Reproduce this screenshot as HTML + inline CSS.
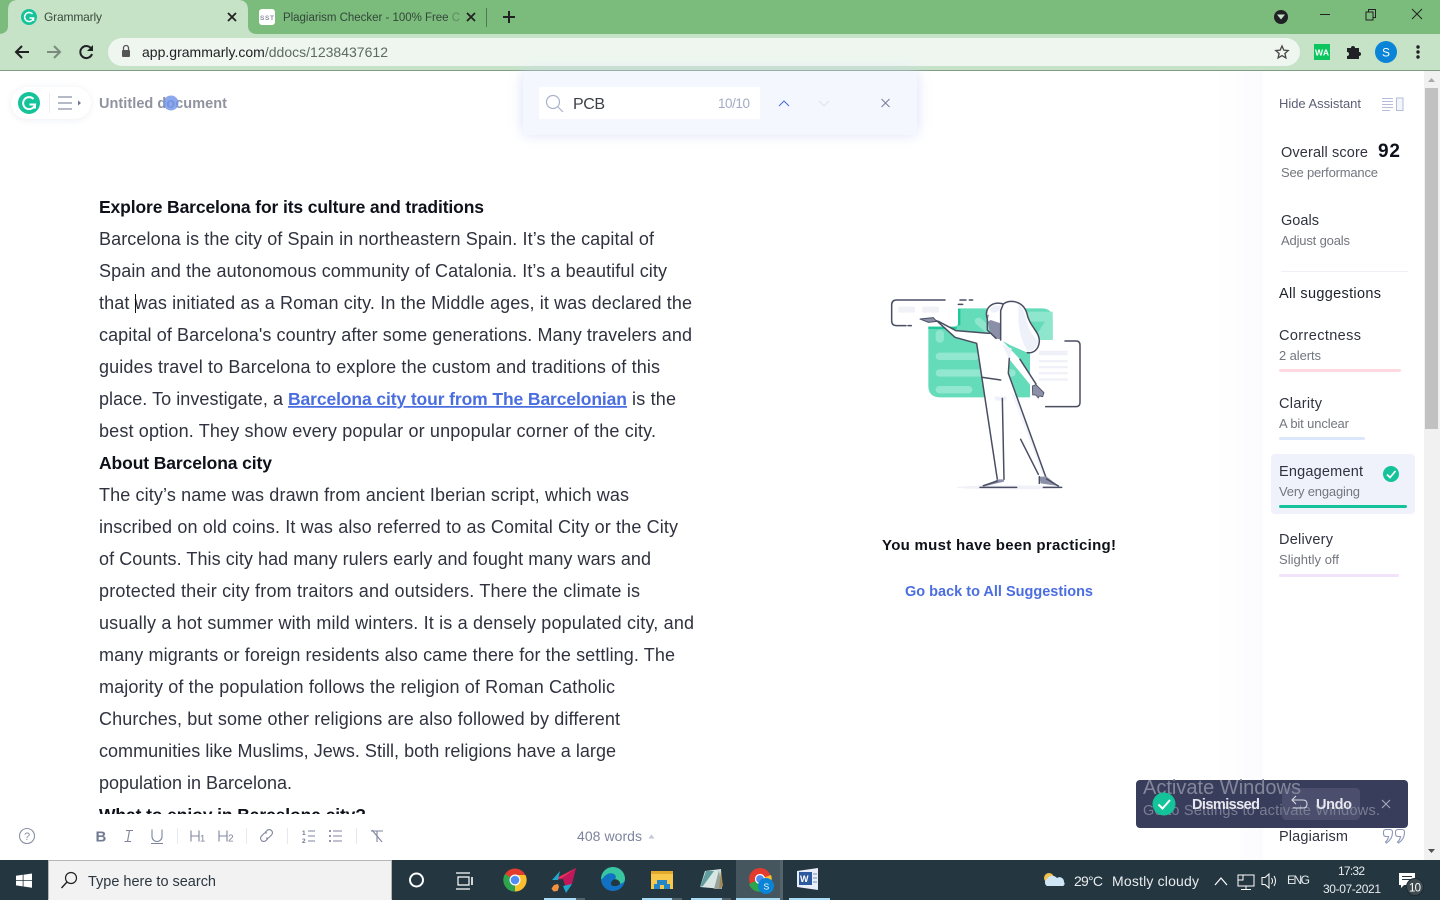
<!DOCTYPE html>
<html lang="en"><head><meta charset="utf-8"><title>Grammarly</title>
<style>
html,body{margin:0;padding:0;background:#fff;width:1440px;height:900px;overflow:hidden}
svg{display:block}
text{font-family:"Liberation Sans",sans-serif}
.b{font-size:18px;fill:#30323f}
.h{font-size:17.5px;font-weight:700;fill:#0e101a}
.s{font-size:14.5px;fill:#30323f}
.m{font-size:13px;fill:#73767f}
.tb{fill:none;stroke:#7d849c;stroke-width:1.1}
</style></head><body>
<svg width="1440" height="900" viewBox="0 0 1440 900" xmlns="http://www.w3.org/2000/svg">
<defs>
<linearGradient id="pg" x1="0" x2="1" y1="0" y2="0"><stop offset="0" stop-color="#fff"/><stop offset="1" stop-color="#fbfbfd"/></linearGradient>
<filter id="sh" x="-20%" y="-50%" width="140%" height="200%"><feGaussianBlur stdDeviation="7"/></filter>
<filter id="sh2" x="-20%" y="-50%" width="140%" height="200%"><feGaussianBlur stdDeviation="4"/></filter>
<clipPath id="doc"><rect x="0" y="130" width="720" height="684"/></clipPath>
</defs>
<rect width="1440" height="900" fill="#fff"/>

<!-- Chrome top -->
<rect width="1440" height="34" fill="#7bbb7c"/>
<rect y="34" width="1440" height="36" fill="#c6e2c7"/>
<rect y="70" width="1440" height="1" fill="#7f9d84"/>
<path d="M0 34 Q8 33 8 26 V10 Q8 0 18 0 H238 Q248 0 248 10 V26 Q248 33 256 34Z" fill="#c6e2c7"/>
<circle cx="29" cy="17" r="8" fill="#15c39a"/>
<path d="M32.500 14 A4.500 4.500 0 1 0 33.500 18 H29.500 M33.500 18 L33.500 21" fill="none" stroke="#fff" stroke-width="1.500"/>
<text x="44" y="21" font-size="12" fill="#3a4a3c" textLength="58">Grammarly</text>
<path d="M228 13 L236 21 M236 13 L228 21" stroke="#222" stroke-width="1.800"/>
<rect x="259" y="9" width="16" height="16" rx="3" fill="#fff"/>
<text x="260" y="20" font-size="6.500" font-weight="700" fill="#8a8fa0" textLength="14">SST</text>
<text x="283" y="21" font-size="11.500" fill="#33463a" textLength="177">Plagiarism Checker - 100% Free C</text>
<rect x="449" y="8" width="12" height="18" fill="#7bbb7c" opacity=".6"/>
<path d="M467 13 L475 21 M475 13 L467 21" stroke="#222" stroke-width="1.800"/>
<rect x="486" y="8" width="1" height="19" fill="#4f7a50"/>
<path d="M509 11 V23 M503 17 H515" stroke="#222" stroke-width="2"/>
<circle cx="1281" cy="17" r="7" fill="#202124"/><path d="M1277 14.500 H1285 L1281 19.500Z" fill="#c6e2c7"/>
<rect x="1320" y="14" width="10" height="1" fill="#222"/>
<path d="M1366 12 h7 v8 h-7z M1368.500 12 v-2.500 h7 v8 h-2.500" fill="none" stroke="#222" stroke-width="1"/>
<path d="M1412 9 L1422 19 M1422 9 L1412 19" stroke="#222" stroke-width="1"/>

<!-- toolbar -->
<path d="M29 52 H16 M22 46 L16 52 L22 58" fill="none" stroke="#202124" stroke-width="2"/>
<path d="M47 52 H60 M54 46 L60 52 L54 58" fill="none" stroke="#7c8a7e" stroke-width="2"/>
<path d="M91.500 49 A6 6 0 1 0 92 54" fill="none" stroke="#202124" stroke-width="2"/><path d="M93 45 V51 H87Z" fill="#202124"/>
<rect x="108" y="38" width="1192" height="28" rx="14" fill="#eff6f0"/>
<rect x="122" y="50" width="8" height="7" rx="1" fill="#555"/><path d="M123.500 50 V48 a2.500 2.500 0 0 1 5 0 V50" fill="none" stroke="#555" stroke-width="1.300"/>
<text x="142" y="57" font-size="14" fill="#5c6a60" textLength="246"><tspan fill="#202124">app.grammarly.com</tspan>/ddocs/1238437612</text>
<path d="M1282 46 l1.800 4.100 4.400 .4 -3.300 3 1 4.400 -3.900 -2.300 -3.900 2.300 1 -4.400 -3.300 -3 4.400 -.4z" fill="none" stroke="#444" stroke-width="1.300"/>
<rect x="1314" y="44" width="16" height="16" fill="#0cc55f"/>
<text x="1315" y="55.500" font-size="8.500" font-weight="700" fill="#fff" textLength="14">WA</text>
<path d="M1347 49 h4 a2 2 0 0 1 4 0 h4 v4 a2 2 0 0 1 0 4 v3 h-12 v-3 a2 2 0 0 0 0 -4z" fill="#202124" transform="translate(0,-1)"/>
<circle cx="1386" cy="52" r="11" fill="#0a84d6"/>
<text x="1382" y="56.500" font-size="12" fill="#fff">S</text>
<circle cx="1418" cy="47" r="1.700" fill="#202124"/><circle cx="1418" cy="52" r="1.700" fill="#202124"/><circle cx="1418" cy="57" r="1.700" fill="#202124"/>

<!-- side shade -->
<rect x="1215" y="71" width="48" height="789" fill="url(#pg)"/>

<!-- grammarly pill -->
<rect x="12" y="89" width="78" height="30" rx="15" fill="#d8dbe6" filter="url(#sh2)" opacity=".6"/>
<rect x="11" y="87" width="80" height="32" rx="16" fill="#fff"/>
<circle cx="29" cy="103" r="11" fill="#15c39a"/>
<path d="M33.500 99 A6 6 0 1 0 35 104.500 H29.500 M35 104.500 V108.500" fill="none" stroke="#fff" stroke-width="2"/>
<rect x="49" y="93" width="1" height="20" fill="#eceef3"/>
<path d="M58 97 H72 M58 103 H72 M58 109 H72" stroke="#6d758d" stroke-width="1.100"/>
<path d="M78 100.500 L81 103 L78 105.500Z" fill="#6d758d"/>
<text x="99" y="108" font-size="14.500" font-weight="700" fill="#8f939f" textLength="128">Untitled document</text>
<circle cx="171" cy="103" r="7.500" fill="#6f93ec" opacity=".8"/>

<!-- Find bar -->
<rect x="523" y="72" width="394" height="62" rx="4" fill="#cfd8f5" filter="url(#sh)" opacity=".8"/>
<path d="M523 71 H917 V130 Q917 135 912 135 H528 Q523 135 523 130Z" fill="#f5f7fe"/>
<rect x="539" y="87" width="221" height="32" fill="#fff"/>
<circle cx="553" cy="102" r="6.500" fill="none" stroke="#a9b2cc" stroke-width="1.200"/><path d="M558 107 L563 112" stroke="#a9b2cc" stroke-width="1.200"/>
<text x="573" y="109" font-size="16" fill="#3e4048" textLength="32">PCB</text>
<text x="718" y="108" font-size="13.500" fill="#a3abc5" textLength="32">10/10</text>
<path d="M779 106 L784 101 L789 106" fill="none" stroke="#4a6ee0" stroke-width="1.100"/>
<path d="M819 101 L824 106 L829 101" fill="none" stroke="#dfe3f1" stroke-width="1.100"/>
<path d="M881.500 99 L889.500 107 M889.500 99 L881.500 107" stroke="#7b819b" stroke-width="1.100"/>

<!-- Document -->
<g clip-path="url(#doc)">
<text x="99" y="213" class="h" textLength="385">Explore Barcelona for its culture and traditions</text>
<text x="99" y="245" class="b" textLength="555">Barcelona is the city of Spain in northeastern Spain. It’s the capital of</text>
<text x="99" y="277" class="b" textLength="568">Spain and the autonomous community of Catalonia. It’s a beautiful city</text>
<text x="99" y="309" class="b" textLength="593">that was initiated as a Roman city. In the Middle ages, it was declared the</text>
<text x="99" y="341" class="b" textLength="593">capital of Barcelona's country after some generations. Many travelers and</text>
<text x="99" y="373" class="b" textLength="561">guides travel to Barcelona to explore the custom and traditions of this</text>
<text x="99" y="405" class="b" textLength="184">place. To investigate, a</text>
<text x="288" y="405" font-size="17.500" font-weight="700" fill="#4a6ee0" text-decoration="underline" textLength="339">Barcelona city tour from The Barcelonian</text>
<text x="632" y="405" class="b" textLength="44">is the</text>
<text x="99" y="437" class="b" textLength="557">best option. They show every popular or unpopular corner of the city.</text>
<text x="99" y="469" class="h" textLength="173">About Barcelona city</text>
<text x="99" y="501" class="b" textLength="530">The city’s name was drawn from ancient Iberian script, which was</text>
<text x="99" y="533" class="b" textLength="579">inscribed on old coins. It was also referred to as Comital City or the City</text>
<text x="99" y="565" class="b" textLength="552">of Counts. This city had many rulers early and fought many wars and</text>
<text x="99" y="597" class="b" textLength="541">protected their city from traitors and outsiders. There the climate is</text>
<text x="99" y="629" class="b" textLength="595">usually a hot summer with mild winters. It is a densely populated city, and</text>
<text x="99" y="661" class="b" textLength="576">many migrants or foreign residents also came there for the settling. The</text>
<text x="99" y="693" class="b" textLength="516">majority of the population follows the religion of Roman Catholic</text>
<text x="99" y="725" class="b" textLength="521">Churches, but some other religions are also followed by different</text>
<text x="99" y="757" class="b" textLength="517">communities like Muslims, Jews. Still, both religions have a large</text>
<text x="99" y="789" class="b" textLength="193">population in Barcelona.</text>
<text x="99" y="821" class="h" textLength="267">What to enjoy in Barcelona city?</text>
</g>
<rect x="135" y="294" width="1" height="19" fill="#111"/>

<!-- Illustration -->
<g transform="translate(870,280) scale(.33333)">
<path d="M265 85 H515 Q548 85 548 118 V180 H480 V352 H210 Q175 352 175 317 V140 H250 Q265 140 265 125Z" fill="#64dcb9"/>
<rect x="175" y="140" width="85" height="7" fill="#1fc79a"/><rect x="264" y="86" width="7" height="50" fill="#1fc79a"/>
<rect x="197" y="150" width="25" height="38" rx="12" fill="#8ee6cd"/>
<rect x="197" y="218" width="130" height="22" rx="11" fill="#91e7cf"/>
<rect x="197" y="268" width="240" height="22" rx="11" fill="#91e7cf"/>
<rect x="197" y="318" width="110" height="22" rx="11" fill="#91e7cf"/>
<path d="M470 95 H548 V180 H490 L525 125 H480Z" fill="#8ee6cd"/>
<rect x="310" y="125" width="60" height="22" rx="11" transform="rotate(40 340 136)" fill="#8ee6cd"/>
<path d="M480 182 H620 Q630 182 630 195 V368 Q630 380 618 380 H480Z" fill="#fff"/>
<path d="M585 183 H618 Q630 183 630 195 V368 Q630 380 618 380 H527" fill="none" stroke="#4a4e63" stroke-width="4.500" stroke-linecap="round"/>
<rect x="507" y="212" width="86" height="14" rx="2" fill="#f0f1f8"/>
<rect x="507" y="240" width="86" height="7" fill="#f0f1f8"/><rect x="507" y="258" width="86" height="7" fill="#f0f1f8"/><rect x="507" y="276" width="86" height="7" fill="#f0f1f8"/><rect x="507" y="295" width="86" height="7" fill="#f0f1f8"/>
<path d="M225 60 H80 Q65 60 65 75 V122 Q65 137 80 137 H108 M114 137 H124 M270 60 H288 M298 60 H308 M265 73 H278" fill="none" stroke="#4a4e63" stroke-width="4.500" stroke-linecap="round"/>
<rect x="85" y="80" width="50" height="18" rx="5" fill="#f1f2f8"/><rect x="157" y="80" width="50" height="18" rx="5" fill="#f1f2f8"/>
<ellipse cx="420" cy="622" rx="160" ry="6" fill="#f1f2f8"/>
<!-- body -->
<path d="M200 122 L255 150 L358 160 L395 180 L450 238 L498 312 L487 322 L420 240 L417 280 L527 590 L505 595 L452 478 L402 355 L402 598 L382 598 L320 190 L255 172Z" fill="#fff"/>
<path d="M398 195 L425 205 L418 240Z" fill="#eef1f9"/>
<path d="M372 350 H410 L408 362 H378Z" fill="#eef1f9"/>
<path d="M425 340 L435 345 L525 585 L518 585Z" fill="#f3f5fb"/>
<path d="M200 122 L255 172 L320 190 L382 598 M205 124 L258 152 L358 160 M338 292 L392 300 M397 355 L402 598 M418 235 L415 280 L527 590 M450 238 L498 312 M452 478 L505 583" fill="none" stroke="#4a4e63" stroke-width="4.500" stroke-linecap="round" stroke-linejoin="round"/>
<!-- feet -->
<path d="M380 598 H402 V605 L340 620 Q360 608 380 600Z" fill="#8c8fa8"/>
<path d="M508 590 H530 L565 618 L512 610Z" fill="#8c8fa8"/>
<path d="M330 622 H440 M340 617 L382 603 M520 622 H575 M530 597 L565 618 M508 590 V610" fill="none" stroke="#4a4e63" stroke-width="4.500" stroke-linecap="round"/>
<!-- hand -->
<path d="M150 117 L190 113 L200 124 L175 127Z" fill="#8c8fa8" stroke="#4a4e63" stroke-width="3" stroke-linejoin="round"/>
<path d="M487 318 L498 314 L522 338 L518 350 L508 348 L505 354 L497 345 L488 345Z" fill="#8c8fa8" stroke="#4a4e63" stroke-width="2.500" stroke-linejoin="round"/>
<!-- face / hair -->
<path d="M350 108 C343 78 372 62 400 72 C420 58 458 62 470 98 C478 140 510 155 508 185 C505 212 488 220 472 218 L420 195 L392 180 L392 130 L362 112 Z" fill="#fff"/>
<path d="M350 105 L392 100 L392 178 L375 175 L358 150 Z" fill="#8c8fa8"/>
<path d="M362 120 L352 125 L358 100 L392 100 L392 130Z" fill="#fff"/>
<path d="M360 85 Q380 70 394 80 Q385 100 365 98Z" fill="#eef1f9"/>
<path d="M445 72 Q465 90 470 125 Q480 160 505 185 Q498 212 472 215 Q448 170 445 125Z" fill="#eef1f9"/>
<path d="M352 118 C340 80 372 62 400 72 C420 58 458 62 470 98 C478 140 510 155 508 185 C505 212 488 220 472 218 M400 72 L392 92 V180 M352 118 L352 150 L378 175" fill="none" stroke="#4a4e63" stroke-width="4.500" stroke-linecap="round" stroke-linejoin="round"/>
</g>
<text x="882" y="550" font-size="15" font-weight="700" fill="#0e101a" textLength="234">You must have been practicing!</text>
<text x="905" y="596" font-size="14.500" font-weight="700" fill="#4a6ee0" textLength="188">Go back to All Suggestions</text>

<!-- Assistant sidebar -->
<text x="1279" y="108" font-size="13" fill="#5c6078" textLength="82">Hide Assistant</text>
<path d="M1382 98.500 H1393 M1382 101.500 H1393 M1382 104.500 H1393 M1382 107.500 H1393 M1382 110.500 H1390" stroke="#b6bdd8" stroke-width="1"/>
<rect x="1396.500" y="98" width="6.500" height="12.500" fill="#f4f5fb" stroke="#b6bdd8"/>
<text x="1281" y="157" class="s" textLength="87">Overall score</text>
<text x="1378" y="157" font-size="19" font-weight="700" fill="#0e101a" textLength="22">92</text>
<text x="1281" y="177" class="m" textLength="97">See performance</text>
<text x="1281" y="225" class="s" textLength="38">Goals</text>
<text x="1281" y="245" class="m" textLength="69">Adjust goals</text>
<rect x="1281" y="271" width="127" height="1" fill="#eef0f6"/>
<text x="1279" y="298" font-size="14.500" fill="#1e202c" textLength="102">All suggestions</text>
<text x="1279" y="340" class="s" textLength="82">Correctness</text>
<text x="1279" y="360" class="m" textLength="42">2 alerts</text>
<rect x="1279" y="369" width="122" height="3" rx="1.500" fill="#ffd9df"/>
<text x="1279" y="408" class="s" textLength="43">Clarity</text>
<text x="1279" y="428" class="m" textLength="70">A bit unclear</text>
<rect x="1279" y="437" width="86" height="3" rx="1.500" fill="#dbe7fb"/>
<rect x="1271" y="454" width="144" height="60" rx="4" fill="#eff2fb"/>
<text x="1279" y="476" class="s" textLength="84">Engagement</text>
<text x="1279" y="496" class="m" textLength="81">Very engaging</text>
<rect x="1279" y="505" width="128" height="3" rx="1.500" fill="#15c39a"/>
<circle cx="1391" cy="474" r="8" fill="#15c39a"/>
<path d="M1387 474.500 L1390 477.500 L1395.500 471" fill="none" stroke="#fff" stroke-width="1.700"/>
<text x="1279" y="544" class="s" textLength="54">Delivery</text>
<text x="1279" y="564" class="m" textLength="60">Slightly off</text>
<rect x="1279" y="574" width="120" height="3" rx="1.500" fill="#f2e3fb"/>

<!-- Scrollbar -->
<rect x="1424" y="71" width="16" height="789" fill="#f1f1f1"/>
<rect x="1425" y="88" width="13" height="341" fill="#c1c1c1"/>
<path d="M1428 82 L1431.500 78 L1435 82Z" fill="#a8a8a8"/>
<path d="M1428 849 L1431.500 853 L1435 849Z" fill="#505050"/>

<!-- bottom toolbar -->
<rect x="0" y="814" width="1240" height="46" fill="#fff"/>
<circle cx="27" cy="836" r="7.500" fill="none" stroke="#8a91a8" stroke-width="1.100"/>
<text x="24" y="840" font-size="11" fill="#8a91a8">?</text>
<text x="95.500" y="841.500" font-size="15" font-weight="700" fill="#737b94">B</text>
<path d="M126 830.500 H133 M124.500 841.500 H131 M129.500 830.500 L127.500 841.500" class="tb"/>
<path d="M152 830 V837 a5 5 0 0 0 10 0 V830" class="tb" transform="translate(0,-.5)"/><rect x="151" y="843" width="12" height="1" fill="#7d849c"/>
<rect x="177" y="828" width="1" height="16" fill="#e6e8f0"/>
<path d="M191 830.500 V841.500 M199 830.500 V841.500 M191 836 H199" class="tb"/>
<text x="200" y="841.500" font-size="9.500" fill="#7d849c">1</text>
<path d="M219 830.500 V841.500 M227 830.500 V841.500 M219 836 H227" class="tb"/>
<text x="228" y="841.500" font-size="10" fill="#7d849c">2</text>
<rect x="246" y="828" width="1" height="16" fill="#e6e8f0"/>
<path d="M265 833 l2 -2 a3 3 0 0 1 4.500 4.500 l-2.500 2.500 a3 3 0 0 1 -3 .5 M268 839 l-2 2 a3 3 0 0 1 -4.500 -4.500 l2.500 -2.500 a3 3 0 0 1 3 -.5" class="tb" transform="translate(0,-.5)"/>
<rect x="287" y="828" width="1" height="16" fill="#e6e8f0"/>
<text x="302" y="835" font-size="6.500" font-weight="700" fill="#6d758d">1</text><text x="302" y="843" font-size="6.500" font-weight="700" fill="#6d758d">2</text>
<path d="M308 831 H315 M308 836 H315 M308 841 H315" class="tb"/>
<circle cx="330" cy="831" r="1" fill="#6d758d"/><circle cx="330" cy="836" r="1" fill="#6d758d"/><circle cx="330" cy="841" r="1" fill="#6d758d"/>
<path d="M333 831 H342 M333 836 H342 M333 841 H342" class="tb"/>
<rect x="356" y="828" width="1" height="16" fill="#e6e8f0"/>
<path d="M371 831 H383 M377 831 V842 M372 830 L382 842" class="tb"/>
<text x="577" y="841" font-size="14" fill="#7d849c" textLength="65">408 words</text>
<path d="M648.500 838.500 L651.500 834.500 L654.500 838.500Z" fill="#c2c7d8"/>
<text x="1279" y="841" class="s" textLength="69">Plagiarism</text>
<path id="q" d="M1386 829.500 h4 q2.500 0 2.500 3 q0 6.500 -6 10.500 l-1 -1 q2.500 -2 3 -5.500 h-2.500 q-2.500 0 -2.500 -3 v-1.500 q0 -2.500 2.500 -2.500z" fill="none" stroke="#8d96b8" stroke-width="1.100"/>
<path d="M1398 829.500 h4 q2.500 0 2.500 3 q0 6.500 -6 10.500 l-1 -1 q2.500 -2 3 -5.500 h-2.500 q-2.500 0 -2.500 -3 v-1.500 q0 -2.500 2.500 -2.500z" fill="none" stroke="#8d96b8" stroke-width="1.100"/>

<!-- Dismissed toast -->
<rect x="1136" y="780" width="272" height="48" rx="4" fill="#393d5c"/>
<rect x="1282" y="788" width="78" height="32" rx="4" fill="#4b4f6d"/>
<text x="1143" y="794" font-size="20" fill="#84879a" textLength="158">Activate Windows</text>
<text x="1143" y="815" font-size="14.500" fill="#7a7d92" textLength="237">Go to Settings to activate Windows.</text>
<circle cx="1164" cy="804" r="11.500" fill="#15c39a"/>
<path d="M1158.500 804.500 L1162.500 808.500 L1170 800" fill="none" stroke="#fff" stroke-width="2"/>
<text x="1192" y="809" font-size="14.500" font-weight="700" fill="#e7e8ef" textLength="68">Dismissed</text>
<path d="M1296 796 L1292 800 L1296 804 M1292 800 H1303 Q1307 800 1307 804 Q1307 808 1303 808 H1293" fill="none" stroke="#d8d9e3" stroke-width="1.100"/>
<text x="1316" y="809" font-size="14.500" font-weight="700" fill="#e7e8ef" textLength="36">Undo</text>
<path d="M1382 800 L1390 808 M1390 800 L1382 808" stroke="#a6a9bb" stroke-width="1.100"/>

<!-- Taskbar -->
<rect y="860" width="1440" height="40" fill="#243640"/>
<g fill="#fff"><path d="M16 875.800 L22.700 874.800 V880.200 H16Z"/><path d="M23.500 874.700 L32 873.500 V880.200 H23.500Z"/><path d="M16 881 H22.700 V886.400 L16 885.400Z"/><path d="M23.500 881 H32 V887.700 L23.500 886.500Z"/></g>
<rect x="48" y="860" width="344" height="40" fill="#f2f2f2"/>
<path d="M48.500 899.500 V860.500 H391.500 V899.500" fill="none" stroke="#b5b5b5"/>
<circle cx="71" cy="878" r="5.500" fill="none" stroke="#222" stroke-width="1.200"/><path d="M67 882 L61.500 888" stroke="#222" stroke-width="1.400"/>
<text x="88" y="886" font-size="14.500" fill="#2c3640" textLength="128">Type here to search</text>
<circle cx="416.500" cy="880" r="6.500" fill="none" stroke="#fff" stroke-width="2"/>
<path d="M456 873 H470 M458 877 H469 V885 H458Z M456 889 H470" fill="none" stroke="#fff" stroke-width="1.200"/><rect x="471" y="877" width="2" height="8" fill="#fff" opacity=".8"/>
<!-- chrome -->
<circle cx="515" cy="880" r="11.500" fill="#e33b2e"/>
<path d="M515 880 L505 886 A11.500 11.500 0 0 0 515 891.500Z" fill="#2da44e"/><path d="M515 880 L515 891.500 A11.500 11.500 0 0 0 525.500 875 H515Z" fill="#fbc02d"/>
<path d="M505 886 A11.500 11.500 0 0 1 505 874 L515 880Z" fill="#2da44e"/>
<circle cx="515" cy="880" r="5.500" fill="#fff"/><circle cx="515" cy="880" r="4.300" fill="#4f8df5"/>
<!-- rocket -->
<path d="M576 868 L572 884 L566 888 L563 879 L553 880Z" fill="#c2185b"/><path d="M576 868 L562 878 L553 880Z" fill="#e8325a"/>
<path d="M560 871 L552 880 H558Z" fill="#1fa8c9"/><path d="M572 884 L566 893 L563 886Z" fill="#1fa8c9"/>
<path d="M554 885 l4 -1 1 3 -1.500 4 -4 .5 -2 -3z" fill="#f59242"/>
<!-- edge -->
<circle cx="613" cy="879" r="12" fill="#1172c4"/>
<path d="M601 879 A12 12 0 0 1 625 879 C625 885 615 885 614 881 C620 874 610 871 606 875 C603 877 602 880 601 879Z" fill="#38c6a0"/>
<path d="M612 881 A4.500 4.500 0 0 1 620 884 C616 888 608 886 612 881Z" fill="#243640"/>
<!-- folder -->
<path d="M651 871 H660 L662 873 H673 V889 H651Z" fill="#f7c84b"/><rect x="651" y="871" width="22" height="3" fill="#e2a92c"/>
<path d="M657 884 V880 H667 V884 H670 V889 H664 V885 H660 V889 H654 V884Z" fill="#2386c8"/>
<!-- notebook -->
<path d="M705 871 L721 869 L722 889 L700 887Z" fill="#d7e6e2"/><path d="M706 871 L714 871 L703 886 L700 887Z" fill="#5f9da0"/><path d="M719 870 L722 889 L714 889Z" fill="#98a29a"/><path d="M721 870 L723 886 L719 889Z" fill="#a08a58"/>
<!-- active chrome -->
<rect x="736" y="860" width="47" height="40" fill="#46565f"/><rect x="780" y="860" width="3" height="40" fill="#53626b"/>
<circle cx="760" cy="879" r="11" fill="#e33b2e"/>
<path d="M760 879 L749 884 A11 11 0 0 0 770 884Z" fill="#2da44e"/><path d="M760 879 L771 875 A11 11 0 0 1 768 887Z" fill="#fbc02d"/>
<circle cx="760" cy="879" r="4.500" fill="#4f8df5" stroke="#fff" stroke-width="1.200"/>
<circle cx="766" cy="886" r="8" fill="#0a84d6"/><text x="763.500" y="889.500" font-size="8.500" fill="#fff">S</text>
<!-- word -->
<path d="M797 871 L818 868 V890 L797 887Z" fill="#e8edf7"/><rect x="799" y="872" width="13" height="13" fill="#2d5a9e"/>
<text x="800" y="882" font-size="9" font-weight="700" fill="#fff">W</text><path d="M813 874 H817 M813 878 H817 M813 882 H817" stroke="#6d8fc4"/>
<!-- underline highlights -->
<g fill="#a8dcf5"><rect x="544" y="898" width="32" height="2"/><rect x="642" y="898" width="30" height="2"/><rect x="691" y="898" width="31" height="2"/><rect x="736" y="898" width="44" height="2"/><rect x="789" y="898" width="41" height="2"/></g>
<g fill="#53626b"><rect x="576" y="898" width="9" height="2"/><rect x="672" y="898" width="10" height="2"/><rect x="722" y="898" width="9" height="2"/></g>
<!-- tray -->
<circle cx="1049" cy="878" r="5" fill="#f2c14e"/>
<path d="M1047 886 a4 4 0 0 1 0 -7 a6 6 0 0 1 10 -1 a4.500 4.500 0 0 1 7 4 a2.500 2.500 0 0 1 -1 4z" fill="#cfe6f7"/>
<text x="1074" y="886" font-size="14" fill="#e8ecee" textLength="29">29°C</text>
<text x="1112" y="886" font-size="14" fill="#e8ecee" textLength="87">Mostly cloudy</text>
<path d="M1215 885 L1221 878 L1227 885" fill="none" stroke="#fff" stroke-width="1.200"/>
<path d="M1238 875 H1254 V886 H1238Z M1246 886 V889 M1241 889.500 H1251 M1238 875 V880 H1243 V875" fill="none" stroke="#fff" stroke-width="1"/>
<path d="M1262 877.500 H1265 L1269 874 V888 L1265 884.500 H1262Z M1271.500 878 Q1273.500 881 1271.500 884 M1274 876 Q1277 881 1274 886" fill="none" stroke="#fff" stroke-width="1"/>
<text x="1287" y="884" font-size="12" fill="#e8ecee" textLength="23">ENG</text>
<text x="1338" y="875" font-size="12" fill="#e8ecee" textLength="27">17:32</text>
<text x="1323" y="893" font-size="12" fill="#e8ecee" textLength="58">30-07-2021</text>
<path d="M1399 873 H1415 V885 H1404 L1401 888 V885 H1399Z" fill="#fff"/>
<path d="M1402 876.500 H1412 M1402 879.500 H1412" stroke="#243640"/>
<circle cx="1415" cy="887" r="8.500" fill="#3f4a50" stroke="#1c2a32"/>
<text x="1409" y="891.500" font-size="11.500" fill="#fff" textLength="12">10</text>
</svg>
</body></html>
